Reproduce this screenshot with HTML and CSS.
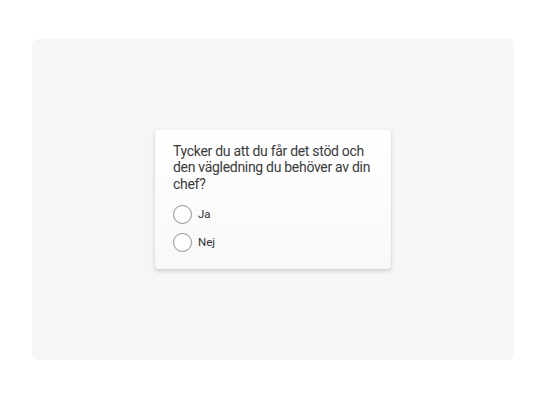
FILE: index.html
```html
<!DOCTYPE html>
<html lang="sv">
<head>
  <meta charset="UTF-8">
  <meta name="viewport" content="width=device-width, initial-scale=1.0">
  <title>Fråga</title>
  <link rel="stylesheet" href="styles.css">
</head>
<body>
  <div class="stage">
    <div class="question-card">
      <p class="question">Tycker du att du får det stöd och den vägledning du behöver av din chef?</p>
      <label class="option">
        <input type="radio" name="support" value="ja">
        <span class="radio"></span>
        <span class="option-label">Ja</span>
      </label>
      <label class="option">
        <input type="radio" name="support" value="nej">
        <span class="radio"></span>
        <span class="option-label">Nej</span>
      </label>
    </div>
  </div>
</body>
</html>
```

FILE: styles.css
```css
body {
  margin: 0;
  padding: 39px 33px 40px 32px;
  background-color: #fff;
  font-family: Roboto, "Liberation Sans", sans-serif;
  color: #333;
}
.stage {
  height: 321px;
  background-color: #f6f6f6;
  border-radius: 6px;
  display: flex;
  align-items: center;
  justify-content: center;
}
.question-card {
  width: 236px;
  box-sizing: border-box;
  padding: 13px 18px 13px;
  background: linear-gradient(#fff, #f8f8f8);
  border-radius: 4px;
  box-shadow: 0 2px 4px rgba(0, 0, 0, 0.18);
}
.question {
  margin: 0 0 8px;
  font-size: 14px;
  line-height: 16.5px;
  letter-spacing: -0.3px;
  color: #3a3a3a;
}
.option {
  display: flex;
  align-items: center;
  gap: 6px;
  height: 28px;
  cursor: pointer;
}
.option input {
  display: none;
}
.radio {
  width: 17px;
  height: 17px;
  border: 1px solid #8b9096;
  border-radius: 50%;
  background-color: #fff;
}
.option-label {
  font-size: 11.5px;
  color: #333;
}
```
